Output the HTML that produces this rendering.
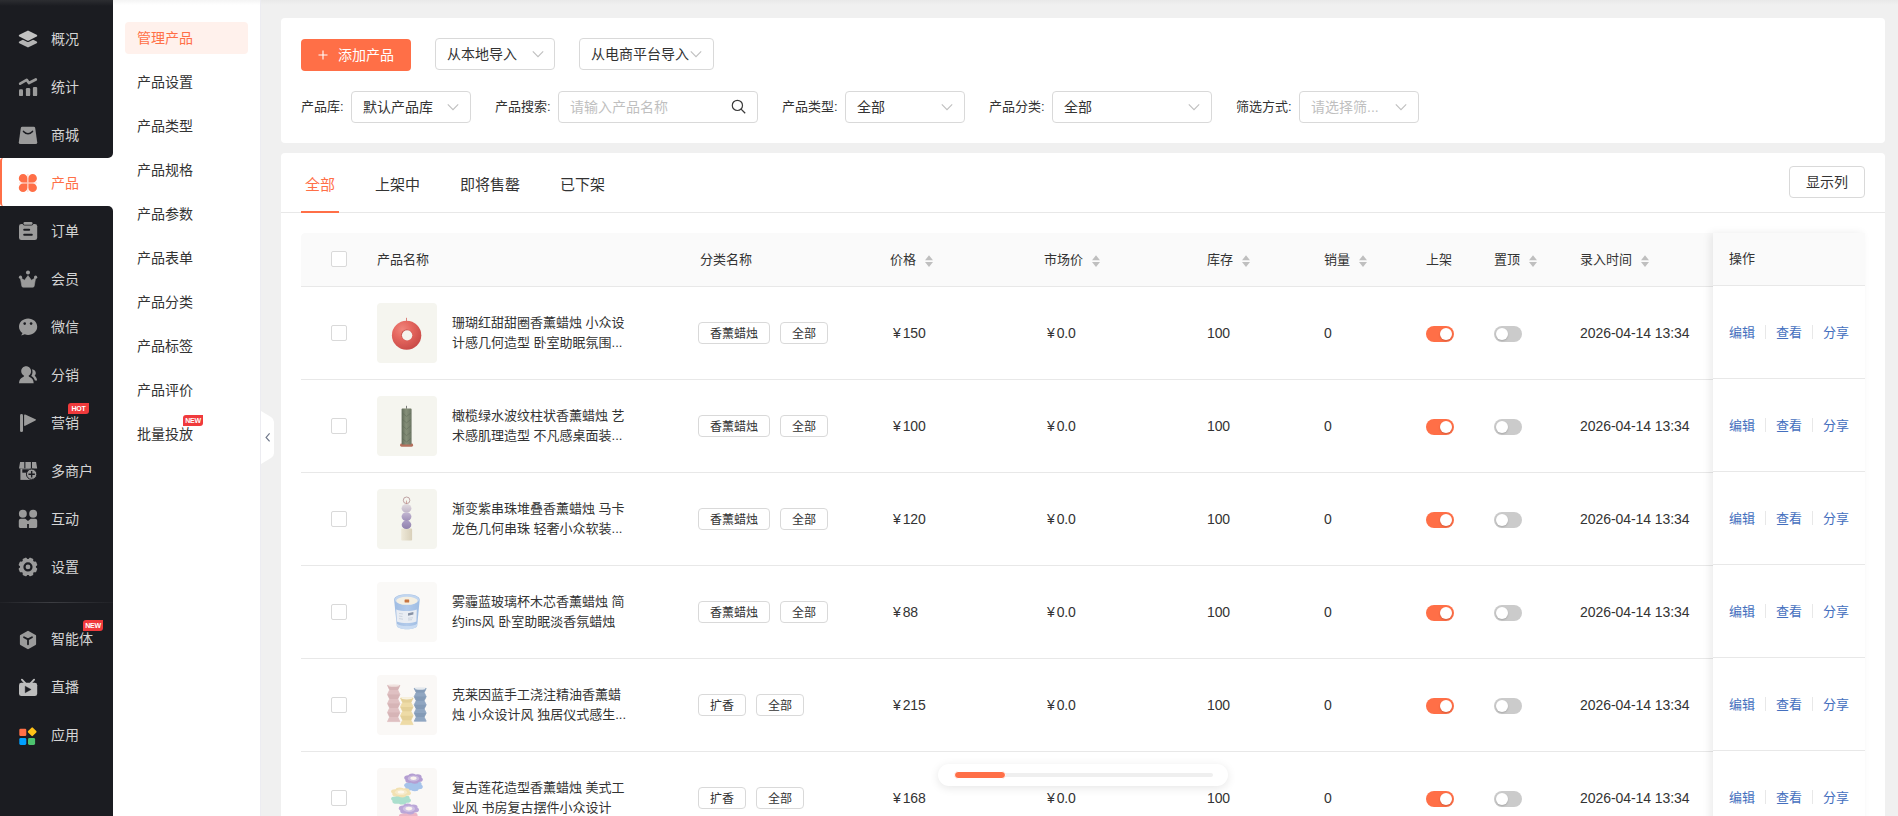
<!DOCTYPE html>
<html lang="zh-CN">
<head>
<meta charset="utf-8">
<title>管理产品</title>
<style>
*{box-sizing:border-box;margin:0;padding:0}
html,body{width:1898px;height:816px;overflow:hidden;background:#f0f0f0}
body{font-family:"Liberation Sans","Noto Sans CJK SC",sans-serif;font-size:14px;color:#333;position:relative}
/* ---------- main sidebar ---------- */
#side{position:absolute;left:0;top:0;width:113px;height:816px;background:#fff;z-index:5}
#side .dk{position:absolute;left:0;width:113px;background:#1b1c21}
#side .topshade{position:absolute;left:0;top:0;width:113px;height:6px;background:linear-gradient(#2c2d31,#1b1c21)}
#side .it{position:absolute;left:0;width:113px;height:48px;color:#d4d4d4;font-size:14px;line-height:50px;padding-left:51px;white-space:nowrap}
#side .it svg{position:absolute;left:18px;top:15px;width:20px;height:20px;fill:#9b9b9b;color:#9b9b9b;overflow:visible}
#side .it.on{background:#fff;color:#ff6f47;border-left:2px solid #ff6f47;padding-left:49px;border-radius:3px 0 0 3px}
#side .it.on svg{left:16px;fill:#ff6f47}
#side .cut{position:absolute;left:0;width:113px;height:8px;background:#fff}
#side .cut i{position:absolute;left:0;top:0;width:113px;height:8px;background:#1b1c21;display:block}
#side .sep{position:absolute;left:0;top:602px;width:113px;height:1px;background:linear-gradient(90deg,#202126,#3c3d42 45%,#202126)}
.badge{position:absolute;height:11px;border-radius:3px 0 3px 0;background:#f03a3c;color:#fff;font-size:7px;line-height:11px;font-weight:bold;text-align:center;letter-spacing:-.2px;font-family:"Liberation Sans",sans-serif}
/* ---------- sub sidebar ---------- */
#sub{position:absolute;left:113px;top:0;width:148px;height:816px;background:linear-gradient(#f4f4f4,#fff 5px);border-right:1px solid #ececf1}
#sub .si{position:absolute;left:12px;width:123px;height:32px;line-height:32px;padding-left:12px;font-size:14px;color:#333;border-radius:4px;white-space:nowrap}
#sub .si.on{background:#fff1ec;color:#ff6f47}
#handle{position:absolute;left:261px;top:411px;width:13px;height:53px;z-index:4}
/* ---------- main ---------- */
.topbar-shade{position:absolute;left:260px;top:0;width:1638px;height:5px;background:linear-gradient(#e9e9e9,#f0f0f0)}
.card{position:absolute;left:281px;width:1604px;background:#fff;border-radius:4px}
#c1{top:18px;height:125px}
#c2{top:153px;height:700px;border-radius:4px 4px 0 0}
.abs{position:absolute;white-space:nowrap}
.btn-primary{left:20px;top:21px;width:110px;height:32px;background:#ff6f47;border-radius:4px;color:#fff;font-size:14px;line-height:32px}
.sel{position:absolute;height:32px;border:1px solid #d9d9d9;border-radius:4px;background:#fff;font-size:14px;line-height:30px;padding-left:11px;color:#333;white-space:nowrap}
.sel.ph{color:#bfbfbf}
.sel svg.chev{position:absolute;top:9px;width:12px;height:12px}
.lbl{position:absolute;font-size:13px;color:#333;line-height:32px;white-space:nowrap}
.tab{position:absolute;top:22px;font-size:15px;line-height:20px;color:#333;white-space:nowrap}
.tab.on{color:#ff6f47}
/* table */
#tbl{position:absolute;left:20px;top:80px;width:1564px;height:600px;overflow:hidden;border-radius:4px 0 0 0}
#thead{position:absolute;left:0;top:0;width:1564px;height:54px;background:#fafafa;border-bottom:1px solid #e8e8e8;border-radius:4px 4px 0 0}
.th{position:absolute;top:0;height:53px;line-height:53px;font-size:13px;color:#333;white-space:nowrap}
.sort{position:absolute;top:22px;width:8px;height:12px}
.row{position:absolute;left:0;width:1564px;height:93px;border-bottom:1px solid #e8e8e8;font-size:13px;color:#333}
.cb{position:absolute;left:30px;width:16px;height:16px;border:1px solid #d9d9d9;border-radius:2px;background:#fff}
.row .cb{top:38px}
.row .img{position:absolute;left:76px;top:16px;width:60px;height:60px;border-radius:4px;overflow:hidden}
.row .img svg{display:block;width:60px;height:60px}
.row .nm{position:absolute;left:151px;top:26px;width:190px;line-height:20px;font-size:13px;color:#333;white-space:nowrap}
.tag{position:absolute;top:35px;height:22px;border:1px solid #d9d9d9;border-radius:4px;font-size:12px;line-height:22px;padding:0 11px;color:#333;background:#fff;white-space:nowrap}
.cell{position:absolute;top:0;line-height:93px;white-space:nowrap;font-size:14px;letter-spacing:-.15px}
.cell.dt{letter-spacing:-.06px}
.sw{position:absolute;top:39px;width:28px;height:16px;border-radius:8px;background:#cbcbcb}
.sw i{position:absolute;left:2px;top:2px;width:12px;height:12px;border-radius:6px;background:#fff;display:block;box-shadow:0 1px 2px rgba(0,0,0,.18)}
.sw.on{background:#ff6f47}
.sw.on i{left:14px}
/* fixed right col */
#fix{position:absolute;left:1432px;top:80px;z-index:2;width:152px;height:600px;background:#fff;box-shadow:-3px 0 8px rgba(0,0,0,.08)}
#fix .fh{position:absolute;left:0;top:0;width:152px;height:53px;background:#fafafa;border-bottom:1px solid #e8e8e8;line-height:52px;padding-left:16px;font-size:13px}
#fix .fr{position:absolute;left:0;width:152px;height:93px;border-bottom:1px solid #e8e8e8;font-size:13px;color:#446fbe;line-height:93px}
#fix .fr span{position:absolute;top:0}
#fix .fr b{position:absolute;top:39px;width:1px;height:14px;background:#e8e8e8;display:block}
/* floating scrollbar */
#fsb{position:absolute;left:938px;top:764px;width:290px;height:22px;border-radius:11px;background:#fff;box-shadow:0 2px 10px rgba(0,0,0,.10);z-index:9}
#fsb .tr{position:absolute;left:17px;top:9px;width:258px;height:4px;border-radius:2px;background:#efefef}
#fsb .tm{position:absolute;left:16px;top:7px;width:52px;height:8px;border-radius:4px;background:#ff6f47;border:1px solid #fff}
.yen{margin-right:2px}
</style>
</head>
<body>
<div class="topbar-shade"></div>

<!-- SIDEBAR -->
<div id="side">
  <div class="dk" style="top:0;height:158px;border-bottom-right-radius:5px"></div>
  <div class="dk" style="top:206px;height:610px;border-top-right-radius:5px"></div>
  <div class="topshade"></div>
  <div class="it" style="top:14px"><svg viewBox="0 0 20 20"><g stroke-linejoin="round" stroke-width="2"><path d="M10 9.2 L18.2 13.3 L10 17.4 L1.8 13.3 Z" fill="#b4b4b4" stroke="#b4b4b4"/><path d="M10 2.6 L18.2 6.7 L10 10.8 L1.8 6.7 Z" fill="#1b1c21" stroke="#1b1c21" stroke-width="4.6"/><path d="M10 2.6 L18.2 6.7 L10 10.8 L1.8 6.7 Z" fill="#c2c2c2" stroke="#c2c2c2"/></g></svg>概况</div>
  <div class="it" style="top:62px"><svg viewBox="0 0 20 20"><path d="M2.2 6.7 L8.7 2.9 L10.9 6 L17.8 2.5" fill="none" stroke="#9b9b9b" stroke-width="2.7" stroke-linecap="round" stroke-linejoin="round"/><rect x="1" y="12.3" width="4" height="6.8" rx="1.2"/><rect x="7.9" y="11" width="4.3" height="8.1" rx="1.2"/><rect x="14.9" y="9.9" width="4.3" height="9.2" rx="1.2"/></svg>统计</div>
  <div class="it" style="top:110px"><svg viewBox="0 0 20 20"><path d="M4.3 1.8 H15.7 Q17 1.8 17.2 3.1 L19.2 17.2 Q19.4 19.1 17.5 19.1 H2.5 Q0.6 19.1 0.8 17.2 L2.8 3.1 Q3 1.8 4.3 1.8 Z"/><path d="M5.5 6.4 Q10 11.2 14.5 6.4" fill="none" stroke="#1b1c21" stroke-width="1.5" stroke-linecap="round"/></svg>商城</div>
  <div class="it on" style="top:158px"><svg viewBox="0 0 20 20"><path d="M5.05 0.9 A4.25 4.25 0 1 0 5.05 9.4 H9.3 V5.15 A4.25 4.25 0 0 0 5.05 0.9 Z"/><path d="M14.65 0.9 A4.25 4.25 0 1 1 14.65 9.4 H10.4 V5.15 A4.25 4.25 0 0 1 14.65 0.9 Z"/><path d="M5.05 19 A4.25 4.25 0 1 1 5.05 10.5 H9.3 V14.75 A4.25 4.25 0 0 1 5.05 19 Z"/><path d="M14.65 19 A4.25 4.25 0 1 0 14.65 10.5 H10.4 V14.75 A4.25 4.25 0 0 0 14.65 19 Z"/><rect x="9.3" y="1" width="1.1" height="18" opacity=".25"/><rect x="1" y="9.4" width="18" height="1.1" opacity=".25"/></svg>产品</div>
  <div class="it" style="top:206px"><svg viewBox="0 0 20 20"><rect x="1" y="2.9" width="18.2" height="16.2" rx="2.4"/><rect x="4.6" y="0.1" width="10.8" height="4.5" rx="2" fill="#1b1c21"/><rect x="5.5" y="0.9" width="9" height="2.9" rx="1.2"/><rect x="5.2" y="7.7" width="7" height="2" rx="1" fill="#1b1c21"/><rect x="5.2" y="12.7" width="9.6" height="2.1" rx="1" fill="#1b1c21"/></svg>订单</div>
  <div class="it" style="top:254px"><svg viewBox="0 0 20 20"><circle cx="9.97" cy="3.6" r="2"/><circle cx="2.5" cy="8.2" r="1.6"/><circle cx="17.6" cy="8.2" r="1.6"/><path d="M2.3 8.6 L6.5 11.3 L10 6.6 L13.5 11.3 L17.7 8.6 L16.2 17 Q16 18.2 14.8 18.2 H5.2 Q4 18.2 3.8 17 Z" stroke="#9b9b9b" stroke-width=".6" stroke-linejoin="round"/></svg>会员</div>
  <div class="it" style="top:302px"><svg viewBox="0 0 20 20"><path d="M10.1 1.6 C5 1.6 1 5.2 1 9.7 C1 12.3 2.4 14.6 4.5 16.1 L3.2 18.6 L6.8 17.3 C7.8 17.7 8.9 17.9 10.1 17.9 C15.2 17.9 19.2 14.3 19.2 9.7 C19.2 5.2 15.2 1.6 10.1 1.6 Z"/><circle cx="6.7" cy="6.6" r="1.3" fill="#1b1c21"/><circle cx="13.1" cy="6.6" r="1.3" fill="#1b1c21"/></svg>微信</div>
  <div class="it" style="top:350px"><svg viewBox="0 0 20 20"><path d="M8.1 1.25 C10.9 1.25 13.1 3.4 13.1 6.2 C13.1 8.2 12 9.9 10.6 10.8 C10.6 11.4 10.9 11.7 11.6 12 C14.2 13 15.5 15 15.7 18.2 H1 C1.2 15 2.5 13 5.1 12 C5.8 11.7 6.1 11.4 6.1 10.8 C4.6 9.9 3.2 8.2 3.2 6.2 C3.2 3.4 5.3 1.25 8.1 1.25 Z"/><path d="M14 4.2 C16.4 4.4 17.8 6 17.8 8 C17.8 9.2 17.3 10.2 16.6 10.8 C17.8 11.8 18.8 13.2 19.1 15.4 H16.9 C16.2 13.2 15 12 13.2 10.9 C14.6 9 14.9 6.6 14 4.2 Z"/></svg>分销</div>
  <div class="it" style="top:398px"><svg viewBox="0 0 20 20"><rect x="2.05" y="1.1" width="2.95" height="18" rx="1.4"/><path d="M6.1 2.3 Q6.1 1.1 7.2 1.6 L17.5 6.2 Q18.6 6.8 17.5 7.4 L7.2 12.8 Q6.1 13.3 6.1 12.1 Z"/></svg>营销</div>
  <div class="it" style="top:446px"><svg viewBox="0 0 20 20"><path d="M2.1 0.9 H6.3 V7.5 H1 Z M7.4 0.9 H12.9 V7.5 H7.4 Z M14 0.9 H18.1 L19.2 7.5 H14 Z"/><path d="M2.4 7.5 H14 V18.9 H2.4 Z"/><rect x="4.3" y="8.3" width="6.4" height="3.4" fill="#1b1c21"/><circle cx="13.65" cy="13.2" r="5.2" stroke="#1b1c21" stroke-width="1"/><path d="M13.65 10 V16.4 M10.45 13.2 H16.85" stroke="#1b1c21" stroke-width="1.4" fill="none"/></svg>多商户</div>
  <div class="it" style="top:494px"><svg viewBox="0 0 20 20"><circle cx="4.85" cy="4.75" r="3.95"/><circle cx="15.15" cy="4.75" r="3.95"/><path d="M2.8 9.7 H7.3 L10 12.1 L12.7 9.7 H17.2 Q19.2 9.7 19.2 11.7 V17.6 Q19.2 18.9 17.9 18.9 H10.9 V15 H9.1 V18.9 H2.1 Q0.8 18.9 0.8 17.6 V11.7 Q0.8 9.7 2.8 9.7 Z"/></svg>互动</div>
  <div class="it" style="top:542px"><svg viewBox="0 0 20 20"><path d="M10.97 2.77 L12.07 1.46 L14.45 2.44 L14.30 4.15 L15.72 5.57 L17.43 5.42 L18.41 7.80 L17.10 8.90 L17.10 10.90 L18.41 12.00 L17.43 14.38 L15.72 14.23 L14.30 15.65 L14.45 17.36 L12.07 18.34 L10.97 17.03 L8.97 17.03 L7.87 18.34 L5.49 17.36 L5.64 15.65 L4.22 14.23 L2.51 14.38 L1.53 12.00 L2.84 10.90 L2.84 8.90 L1.53 7.80 L2.51 5.42 L4.22 5.57 L5.64 4.15 L5.49 2.44 L7.87 1.46 L8.97 2.77Z" stroke="#9b9b9b" stroke-width="1.7" stroke-linejoin="round"/><circle cx="9.97" cy="9.90" r="3.5" fill="none" stroke="#1b1c21" stroke-width="2.2"/></svg>设置</div>
  <div class="it" style="top:614px"><svg viewBox="0 0 20 20"><path d="M10 2.8 L17.1 6.9 V15.1 L10 19.2 L2.9 15.1 V6.9 Z" stroke="#9b9b9b" stroke-width="2" stroke-linejoin="round"/><path d="M6 8.2 L10 10.4 L14 8.2 M10 10.4 V15.3" fill="none" stroke="#1b1c21" stroke-width="1.8" stroke-linecap="round"/></svg>智能体</div>
  <div class="it" style="top:662px"><svg viewBox="0 0 20 20"><g fill="#bdbdbd"><rect x="1" y="5.8" width="18.2" height="13.3" rx="2.4"/><path d="M3.9 2.7 L7.4 6.4 M16.1 2.7 L12.6 6.4" stroke="#bdbdbd" stroke-width="1.9" stroke-linecap="round"/></g><path d="M7.2 9.15 L13.1 12.5 L7.2 15.8 Z" fill="#1b1c21" stroke="#1b1c21" stroke-width=".4" stroke-linejoin="round"/></svg>直播</div>
  <div class="it" style="top:710px"><svg viewBox="0 0 20 20"><rect x="1.3" y="3.8" width="7" height="7.2" rx="1.2" fill="#ff6f47"/><rect x="10.82" y="3.38" width="6.76" height="6.76" rx="1" fill="#ffc117" transform="rotate(45 14.2 6.76)"/><rect x="1.3" y="13" width="7" height="7" rx="1.4" fill="#00a0ff"/><rect x="10" y="13" width="7.1" height="7" rx="1.4" fill="#4cc26e"/></svg>应用</div>
  <div class="sep"></div>
  <div class="badge" style="left:68px;top:403px;width:21px">HOT</div>
  <div class="badge" style="left:83px;top:620px;width:20px">NEW</div>
</div>

<!-- SUB SIDEBAR -->
<div id="sub">
  <div class="si on" style="top:22px">管理产品</div>
  <div class="si" style="top:66px">产品设置</div>
  <div class="si" style="top:110px">产品类型</div>
  <div class="si" style="top:154px">产品规格</div>
  <div class="si" style="top:198px">产品参数</div>
  <div class="si" style="top:242px">产品表单</div>
  <div class="si" style="top:286px">产品分类</div>
  <div class="si" style="top:330px">产品标签</div>
  <div class="si" style="top:374px">产品评价</div>
  <div class="si" style="top:418px">批量投放</div>
  <div class="badge" style="left:70px;top:415px;width:20px">NEW</div>
</div>
<svg id="handle" viewBox="0 0 13 53"><path d="M0 0 L10 6 Q13 8 13 11 L13 42 Q13 45 10 47 L0 53 Z" fill="#fff"/><path d="M8.6 22.4 L5.1 26.4 L8.6 30.4" fill="none" stroke="#6f788a" stroke-width="1.2"/></svg>

<!-- CARD 1 -->
<div class="card" id="c1">
  <div class="abs btn-primary"><svg style="position:absolute;left:17px;top:11px;width:10px;height:10px" viewBox="0 0 10 10"><path d="M5 0.5 V9.5 M0.5 5 H9.5" stroke="#fff" stroke-width="1.1" fill="none"/></svg><span style="position:absolute;left:37px;top:0">添加产品</span></div>
  <div class="sel" style="left:154px;top:20px;width:120px">从本地导入<svg class="chev" style="left:96px" viewBox="0 0 12 12"><path d="M0.8 3.4 L6 8.6 L11.2 3.4" fill="none" stroke="#bfbfbf" stroke-width="1.1"/></svg></div>
  <div class="sel" style="left:298px;top:20px;width:135px">从电商平台导入<svg class="chev" style="left:110px" viewBox="0 0 12 12"><path d="M0.8 3.4 L6 8.6 L11.2 3.4" fill="none" stroke="#bfbfbf" stroke-width="1.1"/></svg></div>
  <div class="lbl" style="left:20px;top:73px">产品库:</div>
  <div class="sel" style="left:70px;top:73px;width:120px">默认产品库<svg class="chev" style="left:95px" viewBox="0 0 12 12"><path d="M0.8 3.4 L6 8.6 L11.2 3.4" fill="none" stroke="#bfbfbf" stroke-width="1.1"/></svg></div>
  <div class="lbl" style="left:214px;top:73px">产品搜索:</div>
  <div class="sel ph" style="left:277px;top:73px;width:200px">请输入产品名称<svg style="position:absolute;left:172px;top:7px;width:15px;height:15px" viewBox="0 0 15 15"><circle cx="6.4" cy="6.4" r="5.1" fill="none" stroke="#3a3a3a" stroke-width="1.2"/><path d="M10.1 10.1 L14.2 14.2" stroke="#3a3a3a" stroke-width="1.3" fill="none"/></svg></div>
  <div class="lbl" style="left:501px;top:73px">产品类型:</div>
  <div class="sel" style="left:564px;top:73px;width:120px">全部<svg class="chev" style="left:95px" viewBox="0 0 12 12"><path d="M0.8 3.4 L6 8.6 L11.2 3.4" fill="none" stroke="#bfbfbf" stroke-width="1.1"/></svg></div>
  <div class="lbl" style="left:708px;top:73px">产品分类:</div>
  <div class="sel" style="left:771px;top:73px;width:160px">全部<svg class="chev" style="left:135px" viewBox="0 0 12 12"><path d="M0.8 3.4 L6 8.6 L11.2 3.4" fill="none" stroke="#bfbfbf" stroke-width="1.1"/></svg></div>
  <div class="lbl" style="left:955px;top:73px">筛选方式:</div>
  <div class="sel ph" style="left:1018px;top:73px;width:120px">请选择筛...<svg class="chev" style="left:95px" viewBox="0 0 12 12"><path d="M0.8 3.4 L6 8.6 L11.2 3.4" fill="none" stroke="#bfbfbf" stroke-width="1.1"/></svg></div>
</div>

<!-- CARD 2 -->
<div class="card" id="c2">
  <div class="tab on" style="left:24px">全部</div>
  <div class="tab" style="left:94px">上架中</div>
  <div class="tab" style="left:179px">即将售罄</div>
  <div class="tab" style="left:279px">已下架</div>
  <div class="abs" style="left:0;top:59px;width:1604px;height:1px;background:#e8e8e8"></div>
  <div class="abs" style="left:20px;top:58px;width:38px;height:2px;background:#ff6f47"></div>
  <div class="sel" style="left:1508px;top:13px;width:76px;padding-left:0;text-align:center">显示列</div>
  <div id="fix"><div class="fh">操作</div><div class="fr" style="top:53px"><span style="left:16px">编辑</span><b style="left:52px"></b><span style="left:63px">查看</span><b style="left:99px"></b><span style="left:110px">分享</span></div><div class="fr" style="top:146px"><span style="left:16px">编辑</span><b style="left:52px"></b><span style="left:63px">查看</span><b style="left:99px"></b><span style="left:110px">分享</span></div><div class="fr" style="top:239px"><span style="left:16px">编辑</span><b style="left:52px"></b><span style="left:63px">查看</span><b style="left:99px"></b><span style="left:110px">分享</span></div><div class="fr" style="top:332px"><span style="left:16px">编辑</span><b style="left:52px"></b><span style="left:63px">查看</span><b style="left:99px"></b><span style="left:110px">分享</span></div><div class="fr" style="top:425px"><span style="left:16px">编辑</span><b style="left:52px"></b><span style="left:63px">查看</span><b style="left:99px"></b><span style="left:110px">分享</span></div><div class="fr" style="top:518px"><span style="left:16px">编辑</span><b style="left:52px"></b><span style="left:63px">查看</span><b style="left:99px"></b><span style="left:110px">分享</span></div></div>
  <div id="tbl"><div id="thead"><div class="cb" style="top:18px"></div>
<div class="th" style="left:76px">产品名称</div>
<div class="th" style="left:399px">分类名称</div>
<div class="th" style="left:589px">价格</div>
<svg class="sort" style="left:624px" viewBox="0 0 8 12"><path d="M4 0.3 L8 5.2 H0 Z M4 12 L8 7 H0 Z" fill="#bfbfbf"/></svg>
<div class="th" style="left:743px">市场价</div>
<svg class="sort" style="left:791px" viewBox="0 0 8 12"><path d="M4 0.3 L8 5.2 H0 Z M4 12 L8 7 H0 Z" fill="#bfbfbf"/></svg>
<div class="th" style="left:906px">库存</div>
<svg class="sort" style="left:941px" viewBox="0 0 8 12"><path d="M4 0.3 L8 5.2 H0 Z M4 12 L8 7 H0 Z" fill="#bfbfbf"/></svg>
<div class="th" style="left:1023px">销量</div>
<svg class="sort" style="left:1058px" viewBox="0 0 8 12"><path d="M4 0.3 L8 5.2 H0 Z M4 12 L8 7 H0 Z" fill="#bfbfbf"/></svg>
<div class="th" style="left:1125px">上架</div>
<div class="th" style="left:1193px">置顶</div>
<svg class="sort" style="left:1228px" viewBox="0 0 8 12"><path d="M4 0.3 L8 5.2 H0 Z M4 12 L8 7 H0 Z" fill="#bfbfbf"/></svg>
<div class="th" style="left:1279px">录入时间</div>
<svg class="sort" style="left:1340px" viewBox="0 0 8 12"><path d="M4 0.3 L8 5.2 H0 Z M4 12 L8 7 H0 Z" fill="#bfbfbf"/></svg>
</div>
<div class="row" style="top:54px"><div class="cb"></div><div class="img"><svg viewBox="0 0 60 60"><defs><filter id="b1" x="-10%" y="-10%" width="120%" height="120%"><feGaussianBlur stdDeviation="0.4"/></filter><radialGradient id="g1" cx="36%" cy="30%" r="80%"><stop offset="0" stop-color="#f0857c"/><stop offset=".4" stop-color="#e5675f"/><stop offset="1" stop-color="#c54644"/></radialGradient><clipPath id="c1"><rect x="0" y="0" width="60" height="45.7"/></clipPath></defs><rect width="60" height="60" fill="#f5f5ef"/><g filter="url(#b1)"><rect x="29.1" y="14.8" width="0.8" height="3.6" fill="#d46660"/><g clip-path="url(#c1)"><ellipse cx="29.6" cy="32.2" rx="14.7" ry="14.5" fill="url(#g1)"/></g><ellipse cx="29.7" cy="31.9" rx="5.5" ry="5.3" fill="#c14a47"/><ellipse cx="30.1" cy="32.3" rx="5.2" ry="5.1" fill="#f5f3ee"/></g></svg></div><div class="nm">珊瑚红甜甜圈香薰蜡烛 小众设<br>计感几何造型 卧室助眠氛围...</div><div class="tag" style="left:397px">香薰蜡烛</div><div class="tag" style="left:479px">全部</div><div class="cell" style="left:592px"><span class="yen">¥</span>150</div><div class="cell" style="left:746px"><span class="yen">¥</span>0.0</div><div class="cell" style="left:906px">100</div><div class="cell" style="left:1023px">0</div><div class="sw on" style="left:1125px"><i></i></div><div class="sw" style="left:1193px"><i></i></div><div class="cell dt" style="left:1279px">2026-04-14 13:34</div></div>
<div class="row" style="top:147px"><div class="cb"></div><div class="img"><svg viewBox="0 0 60 60"><defs><filter id="b2" x="-10%" y="-10%" width="120%" height="120%"><feGaussianBlur stdDeviation="0.35"/></filter><linearGradient id="g2" x1="0" x2="1"><stop offset="0" stop-color="#5f6a58"/><stop offset=".45" stop-color="#869079"/><stop offset="1" stop-color="#6c7664"/></linearGradient></defs><rect width="60" height="60" fill="#f5f5ef"/><g filter="url(#b2)"><rect x="29.2" y="9.8" width="0.7" height="3" fill="#444"/><rect x="23.1" y="47.6" width="13" height="3.1" rx="1.4" fill="#b5705d"/><rect x="24.6" y="12.6" width="10" height="35.8" rx="0.8" fill="url(#g2)"/><path d="M25.4 17 l4.2 3.4 4.2-3.4 M25.4 23.4 l4.2 3.4 4.2-3.4 M25.4 29.8 l4.2 3.4 4.2-3.4 M25.4 36.2 l4.2 3.4 4.2-3.4 M25.4 42.6 l4.2 3.4 4.2-3.4" stroke="#5c6755" stroke-width="1" fill="none" opacity=".45"/></g></svg></div><div class="nm">橄榄绿水波纹柱状香薰蜡烛 艺<br>术感肌理造型 不凡感桌面装...</div><div class="tag" style="left:397px">香薰蜡烛</div><div class="tag" style="left:479px">全部</div><div class="cell" style="left:592px"><span class="yen">¥</span>100</div><div class="cell" style="left:746px"><span class="yen">¥</span>0.0</div><div class="cell" style="left:906px">100</div><div class="cell" style="left:1023px">0</div><div class="sw on" style="left:1125px"><i></i></div><div class="sw" style="left:1193px"><i></i></div><div class="cell dt" style="left:1279px">2026-04-14 13:34</div></div>
<div class="row" style="top:240px"><div class="cb"></div><div class="img"><svg viewBox="0 0 60 60"><defs><filter id="b3" x="-10%" y="-10%" width="120%" height="120%"><feGaussianBlur stdDeviation="0.35"/></filter><linearGradient id="g3a" x1="0" y1="0" x2="0" y2="1"><stop offset="0" stop-color="#e2dce0"/><stop offset="1" stop-color="#c0b4c8"/></linearGradient><linearGradient id="g3b" x1="0" y1="0" x2="0" y2="1"><stop offset="0" stop-color="#c4b8d2"/><stop offset="1" stop-color="#9f90b8"/></linearGradient><linearGradient id="g3c" x1="0" y1="0" x2="0" y2="1"><stop offset="0" stop-color="#ac9ec4"/><stop offset="1" stop-color="#8f80ac"/></linearGradient><linearGradient id="g3d" x1="0" x2="1"><stop offset="0" stop-color="#eee9d9"/><stop offset="1" stop-color="#d9d0ba"/></linearGradient></defs><rect width="60" height="60" fill="#f5f5ef"/><g filter="url(#b3)"><circle cx="29.6" cy="11.3" r="3.3" fill="none" stroke="#a88084" stroke-width="0.7"/><rect x="29.2" y="11.6" width="0.7" height="3.4" fill="#c08a84"/><rect x="24.2" y="39.6" width="10.9" height="12" rx="0.8" fill="url(#g3d)"/><ellipse cx="29.5" cy="35.8" rx="4.8" ry="4.3" fill="url(#g3c)"/><ellipse cx="29.5" cy="27.6" rx="4.9" ry="4.4" fill="url(#g3b)"/><ellipse cx="29.5" cy="19.3" rx="4.9" ry="4.3" fill="url(#g3a)"/></g></svg></div><div class="nm">渐变紫串珠堆叠香薰蜡烛 马卡<br>龙色几何串珠 轻奢小众软装...</div><div class="tag" style="left:397px">香薰蜡烛</div><div class="tag" style="left:479px">全部</div><div class="cell" style="left:592px"><span class="yen">¥</span>120</div><div class="cell" style="left:746px"><span class="yen">¥</span>0.0</div><div class="cell" style="left:906px">100</div><div class="cell" style="left:1023px">0</div><div class="sw on" style="left:1125px"><i></i></div><div class="sw" style="left:1193px"><i></i></div><div class="cell dt" style="left:1279px">2026-04-14 13:34</div></div>
<div class="row" style="top:333px"><div class="cb"></div><div class="img"><svg viewBox="0 0 60 60"><defs><filter id="b4" x="-10%" y="-10%" width="120%" height="120%"><feGaussianBlur stdDeviation="0.4"/></filter><linearGradient id="g4" x1="0" x2="1"><stop offset="0" stop-color="#9fbce2"/><stop offset=".5" stop-color="#b2caea"/><stop offset="1" stop-color="#9fbde3"/></linearGradient></defs><rect width="60" height="60" fill="#faf9f7"/><g filter="url(#b4)"><path d="M17.1 17.7 C17.1 10.4 42.7 10.4 42.7 17.7 L40.2 43.6 C39.6 48.6 20.4 48.6 19.8 43.6 Z" fill="url(#g4)"/><path d="M19.6 41.4 C24 45 36 45 40.4 41.4 L40.1 43.8 C39.4 48.4 20.6 48.4 19.9 43.8 Z" fill="#cfdff3" opacity=".85"/><ellipse cx="29.9" cy="17.6" rx="12.2" ry="5.2" fill="#c2d6ef"/><ellipse cx="29.9" cy="18.8" rx="10.7" ry="4" fill="#f4efe2"/><rect x="27.6" y="17.4" width="4.6" height="3" rx=".5" fill="#c8743f"/><path d="M19.2 27.4 C25 29.6 34 29.6 39.8 27.4 L39.4 39.4 C34 41.6 25 41.6 19.9 39.4 Z" fill="#e9edf3"/><path d="M22 31.4 l4 .6 M22 34 l3.4 .5 M22 36.6 l4 .6 M31 36.2 l5 -.4 M31 38 l4 -.3" stroke="#b9c2d0" stroke-width=".6"/><path d="M31 31.2 l5.4 -1.2 v2.6 l-5.4 1.2z" fill="#8792a5"/></g></svg></div><div class="nm">雾霾蓝玻璃杯木芯香薰蜡烛 简<br>约ins风 卧室助眠淡香氛蜡烛</div><div class="tag" style="left:397px">香薰蜡烛</div><div class="tag" style="left:479px">全部</div><div class="cell" style="left:592px"><span class="yen">¥</span>88</div><div class="cell" style="left:746px"><span class="yen">¥</span>0.0</div><div class="cell" style="left:906px">100</div><div class="cell" style="left:1023px">0</div><div class="sw on" style="left:1125px"><i></i></div><div class="sw" style="left:1193px"><i></i></div><div class="cell dt" style="left:1279px">2026-04-14 13:34</div></div>
<div class="row" style="top:426px"><div class="cb"></div><div class="img"><svg viewBox="0 0 60 60"><defs><filter id="b5" x="-10%" y="-10%" width="120%" height="120%"><feGaussianBlur stdDeviation="0.4"/></filter></defs><rect width="60" height="60" fill="#faf8f6"/><g filter="url(#b5)"><path d="M10.5 10.4 L12.6 14.9 L10.5 19.5 L12.6 24.0 L10.5 28.5 L12.6 33.0 L10.5 37.6 L12.6 42.1 L10.5 46.6 L22.9 46.6 L20.8 42.1 L22.9 37.6 L20.8 33.0 L22.9 28.5 L20.8 24.0 L22.9 19.5 L20.8 14.9 L22.9 10.4Z" fill="#dfc0c2" stroke="#dfc0c2" stroke-width=".8" stroke-linejoin="round"/><path d="M10.5 10.4 L22.9 10.4 L20.8 14.9 L12.6 14.9Z" fill="#cda9ad" opacity=".55"/><path d="M10.5 19.5 L22.9 19.5 L20.8 24.0 L12.6 24.0Z" fill="#cda9ad" opacity=".55"/><path d="M10.5 28.5 L22.9 28.5 L20.8 33.0 L12.6 33.0Z" fill="#cda9ad" opacity=".55"/><path d="M10.5 37.6 L22.9 37.6 L20.8 42.1 L12.6 42.1Z" fill="#cda9ad" opacity=".55"/><ellipse cx="16.7" cy="10.7" rx="5.4" ry="1.1" fill="#f0e2df"/><path d="M37.2 13.4 L39.2 17.5 L37.2 21.6 L39.2 25.7 L37.2 29.8 L39.2 33.9 L37.2 38.0 L39.2 42.1 L37.2 46.2 L49.2 46.2 L47.2 42.1 L49.2 38.0 L47.2 33.9 L49.2 29.8 L47.2 25.7 L49.2 21.6 L47.2 17.5 L49.2 13.4Z" fill="#90a6c1" stroke="#90a6c1" stroke-width=".8" stroke-linejoin="round"/><path d="M37.2 13.4 L49.2 13.4 L47.2 17.5 L39.2 17.5Z" fill="#7a91ae" opacity=".55"/><path d="M37.2 21.6 L49.2 21.6 L47.2 25.7 L39.2 25.7Z" fill="#7a91ae" opacity=".55"/><path d="M37.2 29.8 L49.2 29.8 L47.2 33.9 L39.2 33.9Z" fill="#7a91ae" opacity=".55"/><path d="M37.2 38.0 L49.2 38.0 L47.2 42.1 L39.2 42.1Z" fill="#7a91ae" opacity=".55"/><ellipse cx="43.2" cy="13.7" rx="5.2" ry="1.1" fill="#e4e9ee"/><path d="M23.5 23.0 L25.6 27.4 L23.5 31.9 L25.6 36.3 L23.5 40.7 L25.6 45.2 L23.5 49.6 L36.1 49.6 L34.0 45.2 L36.1 40.7 L34.0 36.3 L36.1 31.9 L34.0 27.4 L36.1 23.0Z" fill="#eedba6" stroke="#eedba6" stroke-width=".8" stroke-linejoin="round"/><path d="M23.5 23.0 L36.1 23.0 L34.0 27.4 L25.6 27.4Z" fill="#dcc68c" opacity=".55"/><path d="M23.5 31.9 L36.1 31.9 L34.0 36.3 L25.6 36.3Z" fill="#dcc68c" opacity=".55"/><path d="M23.5 40.7 L36.1 40.7 L34.0 45.2 L25.6 45.2Z" fill="#dcc68c" opacity=".55"/><ellipse cx="29.8" cy="23.3" rx="5.5" ry="1.1" fill="#f8f2e2"/></g></svg></div><div class="nm">克莱因蓝手工浇注精油香薰蜡<br>烛 小众设计风 独居仪式感生...</div><div class="tag" style="left:397px">扩香</div><div class="tag" style="left:455px">全部</div><div class="cell" style="left:592px"><span class="yen">¥</span>215</div><div class="cell" style="left:746px"><span class="yen">¥</span>0.0</div><div class="cell" style="left:906px">100</div><div class="cell" style="left:1023px">0</div><div class="sw on" style="left:1125px"><i></i></div><div class="sw" style="left:1193px"><i></i></div><div class="cell dt" style="left:1279px">2026-04-14 13:34</div></div>
<div class="row" style="top:519px"><div class="cb"></div><div class="img"><svg viewBox="0 0 60 60"><defs><filter id="b6" x="-10%" y="-10%" width="120%" height="120%"><feGaussianBlur stdDeviation="0.6"/></filter></defs><rect width="60" height="60" fill="#faf8f6"/><g filter="url(#b6)"><ellipse cx="41.9" cy="18.8" rx="3.9" ry="2.5" fill="#a6c3ea"/><ellipse cx="37.8" cy="20.7" rx="3.9" ry="2.5" fill="#a6c3ea"/><ellipse cx="32.3" cy="19.9" rx="3.9" ry="2.5" fill="#a6c3ea"/><ellipse cx="31.1" cy="17.2" rx="3.9" ry="2.5" fill="#a6c3ea"/><ellipse cx="35.2" cy="15.3" rx="3.9" ry="2.5" fill="#a6c3ea"/><ellipse cx="40.7" cy="16.1" rx="3.9" ry="2.5" fill="#a6c3ea"/><ellipse cx="36.5" cy="18.0" rx="6.4" ry="3.5" fill="#a6c3ea"/><ellipse cx="41.9" cy="11.4" rx="3.9" ry="2.5" fill="#b49ed2"/><ellipse cx="37.8" cy="13.3" rx="3.9" ry="2.5" fill="#b49ed2"/><ellipse cx="32.3" cy="12.5" rx="3.9" ry="2.5" fill="#b49ed2"/><ellipse cx="31.1" cy="9.8" rx="3.9" ry="2.5" fill="#b49ed2"/><ellipse cx="35.2" cy="7.9" rx="3.9" ry="2.5" fill="#b49ed2"/><ellipse cx="40.7" cy="8.7" rx="3.9" ry="2.5" fill="#b49ed2"/><ellipse cx="36.5" cy="10.6" rx="6.4" ry="3.5" fill="#b49ed2"/><ellipse cx="36.5" cy="10.4" rx="5.7" ry="3.0" fill="#fff" opacity=".3"/><ellipse cx="36.5" cy="10.2" rx="3.1" ry="1.7" fill="#fffaf0" opacity=".9"/><ellipse cx="29.8" cy="32.4" rx="4.1" ry="2.4" fill="#abdfcd"/><ellipse cx="25.3" cy="34.2" rx="4.1" ry="2.4" fill="#abdfcd"/><ellipse cx="19.5" cy="33.4" rx="4.1" ry="2.4" fill="#abdfcd"/><ellipse cx="18.2" cy="30.8" rx="4.1" ry="2.4" fill="#abdfcd"/><ellipse cx="22.7" cy="29.0" rx="4.1" ry="2.4" fill="#abdfcd"/><ellipse cx="28.5" cy="29.8" rx="4.1" ry="2.4" fill="#abdfcd"/><ellipse cx="24.0" cy="31.6" rx="6.9" ry="3.4" fill="#abdfcd"/><ellipse cx="29.8" cy="25.2" rx="4.1" ry="2.4" fill="#f2e1b2"/><ellipse cx="25.3" cy="27.0" rx="4.1" ry="2.4" fill="#f2e1b2"/><ellipse cx="19.5" cy="26.2" rx="4.1" ry="2.4" fill="#f2e1b2"/><ellipse cx="18.2" cy="23.6" rx="4.1" ry="2.4" fill="#f2e1b2"/><ellipse cx="22.7" cy="21.8" rx="4.1" ry="2.4" fill="#f2e1b2"/><ellipse cx="28.5" cy="22.6" rx="4.1" ry="2.4" fill="#f2e1b2"/><ellipse cx="24.0" cy="24.4" rx="6.9" ry="3.4" fill="#f2e1b2"/><ellipse cx="24.0" cy="24.2" rx="6.1" ry="2.9" fill="#fff" opacity=".3"/><ellipse cx="24.0" cy="24.0" rx="3.3" ry="1.6" fill="#fffaf0" opacity=".9"/><ellipse cx="37.8" cy="49.8" rx="4.2" ry="2.6" fill="#ebb6c6"/><ellipse cx="33.3" cy="51.8" rx="4.2" ry="2.6" fill="#ebb6c6"/><ellipse cx="27.4" cy="50.9" rx="4.2" ry="2.6" fill="#ebb6c6"/><ellipse cx="26.0" cy="48.2" rx="4.2" ry="2.6" fill="#ebb6c6"/><ellipse cx="30.5" cy="46.2" rx="4.2" ry="2.6" fill="#ebb6c6"/><ellipse cx="36.4" cy="47.1" rx="4.2" ry="2.6" fill="#ebb6c6"/><ellipse cx="31.9" cy="49.0" rx="6.9" ry="3.6" fill="#ebb6c6"/><ellipse cx="37.8" cy="41.8" rx="4.2" ry="2.6" fill="#bba7d8"/><ellipse cx="33.3" cy="43.8" rx="4.2" ry="2.6" fill="#bba7d8"/><ellipse cx="27.4" cy="42.9" rx="4.2" ry="2.6" fill="#bba7d8"/><ellipse cx="26.0" cy="40.2" rx="4.2" ry="2.6" fill="#bba7d8"/><ellipse cx="30.5" cy="38.2" rx="4.2" ry="2.6" fill="#bba7d8"/><ellipse cx="36.4" cy="39.1" rx="4.2" ry="2.6" fill="#bba7d8"/><ellipse cx="31.9" cy="41.0" rx="6.9" ry="3.6" fill="#bba7d8"/><ellipse cx="31.9" cy="40.8" rx="6.1" ry="3.1" fill="#fff" opacity=".3"/><ellipse cx="31.9" cy="40.6" rx="3.4" ry="1.8" fill="#fffaf0" opacity=".9"/></g></svg></div><div class="nm">复古莲花造型香薰蜡烛 美式工<br>业风 书房复古摆件小众设计</div><div class="tag" style="left:397px">扩香</div><div class="tag" style="left:455px">全部</div><div class="cell" style="left:592px"><span class="yen">¥</span>168</div><div class="cell" style="left:746px"><span class="yen">¥</span>0.0</div><div class="cell" style="left:906px">100</div><div class="cell" style="left:1023px">0</div><div class="sw on" style="left:1125px"><i></i></div><div class="sw" style="left:1193px"><i></i></div><div class="cell dt" style="left:1279px">2026-04-14 13:34</div></div>
</div>
</div>

<div id="fsb"><div class="tr"></div><div class="tm"></div></div>
</body>
</html>
